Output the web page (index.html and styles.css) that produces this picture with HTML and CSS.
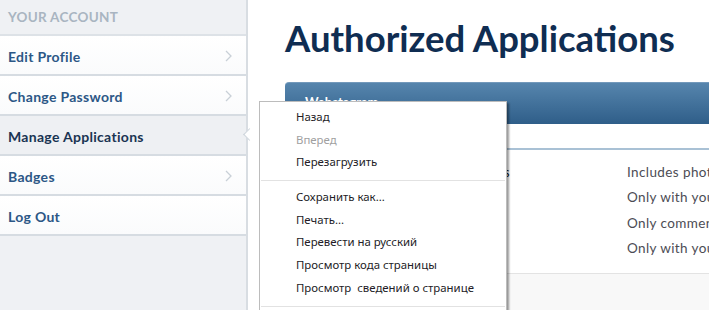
FILE: index.html
```html
<!doctype html>
<html lang="en">
<head>
    <meta charset="UTF-8">
    <title>Authorized Applications</title>
    <link rel="stylesheet" href="styles.css">
</head>
<body>

<aside class="sidebar">
    <div class="sidebar-title">YOUR ACCOUNT</div>
    <a class="side-item" href="#">Edit Profile <svg class="chev" width="7" height="12" viewBox="0 0 7 12"><polyline points="1,1 6,6 1,11"/></svg></a>
    <a class="side-item" href="#">Change Password <svg class="chev" width="7" height="12" viewBox="0 0 7 12"><polyline points="1,1 6,6 1,11"/></svg></a>
    <a class="side-item active" href="#">Manage Applications</a>
    <a class="side-item" href="#">Badges <svg class="chev" width="7" height="12" viewBox="0 0 7 12"><polyline points="1,1 6,6 1,11"/></svg></a>
    <a class="side-item" href="#">Log Out</a>
</aside>

<main class="content">
    <h1>Authorized Applications</h1>

    <section class="card">
        <div class="card-head">Webstagram</div>
        <div class="card-cols">
            <span>Permissions</span>
        </div>
        <div class="card-body">
            <div class="perm">
                <span class="perm-name">Access</span>
                <span class="perm-desc">Includes photos, friends and more</span>
            </div>
            <div class="perm">
                <span class="perm-name"></span>
                <span class="perm-desc">Only with your permission</span>
            </div>
            <div class="perm">
                <span class="perm-name"></span>
                <span class="perm-desc">Only comments you make</span>
            </div>
            <div class="perm">
                <span class="perm-name"></span>
                <span class="perm-desc">Only with your permission</span>
            </div>
        </div>
        <div class="card-foot"></div>
    </section>
</main>

<ul class="ctx-menu">
    <li>Назад</li>
    <li class="disabled">Вперед</li>
    <li>Перезагрузить</li>
    <li class="sep"></li>
    <li>Сохранить как...</li>
    <li>Печать...</li>
    <li>Перевести на русский</li>
    <li>Просмотр кода страницы</li>
    <li>Просмотр &nbsp;сведений о странице</li>
    <li class="sep"></li>
    <li>Проверить элемент</li>
</ul>

</body>
</html>
```

FILE: styles.css
```css
body {
    margin: 0;
    display: flex;
    min-height: 100vh;
    overflow: hidden;
    font-family: Lato, "Liberation Sans", sans-serif;
    background: #fff;
}

.sidebar {
    width: 246px;
    flex: none;
    background: #eff1f4;
    border-right: 2px solid #d8dde2;
}

.sidebar-title {
    height: 34px;
    padding-left: 8px;
    line-height: 34px;
    font-size: 13.5px;
    font-weight: 700;
    letter-spacing: .3px;
    color: #a9b5c1;
    border-bottom: 2px solid #dde2e7;
}

.side-item {
    position: relative;
    display: flex;
    align-items: center;
    justify-content: space-between;
    height: 38px;
    padding: 2px 14px 0 8px;
    box-sizing: border-box;
    height: 40px;
    font-size: 14px;
    font-weight: 700;
    letter-spacing: .3px;
    color: #2c5786;
    text-decoration: none;
    background: linear-gradient(#fff, #fafbfc);
    border-bottom: 2px solid #d6dce2;
}

.side-item.active {
    background: #eef0f3;
    color: #1a3452;
}

.side-item.active::after {
    content: "";
    position: absolute;
    right: -8px;
    top: 14px;
    width: 8px;
    height: 8px;
    background: #fff;
    border-left: 1px solid #ccd3da;
    border-bottom: 1px solid #ccd3da;
    transform: rotate(45deg);
}

.chev {
    fill: none;
    stroke: #c9d0d7;
    stroke-width: 1.3;
}

.content {
    flex: 1;
    padding-left: 37px;
    min-width: 0;
}

h1 {
    margin: 13px 0 0;
    font-size: 36.5px;
    line-height: 50px;
    font-weight: 700;
    color: #0f2d52;
    white-space: nowrap;
}

.card {
    margin-top: 19px;
    width: 600px;
}

.card-head {
    height: 41px;
    padding-left: 20px;
    line-height: 38px;
    font-size: 13px;
    font-weight: 700;
    color: #fff;
    border-top-left-radius: 4px;
    border-top: 1px solid #7399bb;
    background: linear-gradient(#5685ad, #2f5e89);
}

.card-cols {
    height: 24px;
    font-size: 12px;
    color: #fff;
    border-bottom: 2px solid #a9c1d5;
}

.card-body {
    padding: 9px 0 12px;
}

.perm {
    display: flex;
    height: 25.5px;
    align-items: center;
    font-size: 13.5px;
    letter-spacing: .4px;
    color: #4c4c54;
    white-space: nowrap;
}

.perm-name {
    width: 342px;
    flex: none;
    color: #111;
    text-align: right;
    padding-right: 117px;
    box-sizing: border-box;
}

.card-foot {
    height: 60px;
    background: #f8f8f8;
    border-top: 1px solid #e3e3e3;
}

.ctx-menu {
    position: absolute;
    left: 259px;
    top: 101px;
    width: 246px;
    margin: 0;
    padding: 4px 0 0;
    list-style: none;
    background: #fff;
    border: 1px solid #bcbcbc;
    box-shadow: 2px 2px 2px rgba(0, 0, 0, .4);
    font-family: "Noto Sans", "Open Sans", sans-serif;
    font-size: 11.4px;
    color: #231c26;
}

.ctx-menu li {
    height: 22.7px;
    line-height: 22.7px;
    padding-left: 36px;
    white-space: pre;
}

.ctx-menu li.disabled {
    color: #9f9f9f;
}

.ctx-menu li.sep {
    height: 12px;
    padding: 0;
    position: relative;
}

.ctx-menu li.sep::after {
    content: "";
    position: absolute;
    left: 1px;
    right: 1px;
    top: 6px;
    border-top: 1px solid #e2e2e2;
}
```
